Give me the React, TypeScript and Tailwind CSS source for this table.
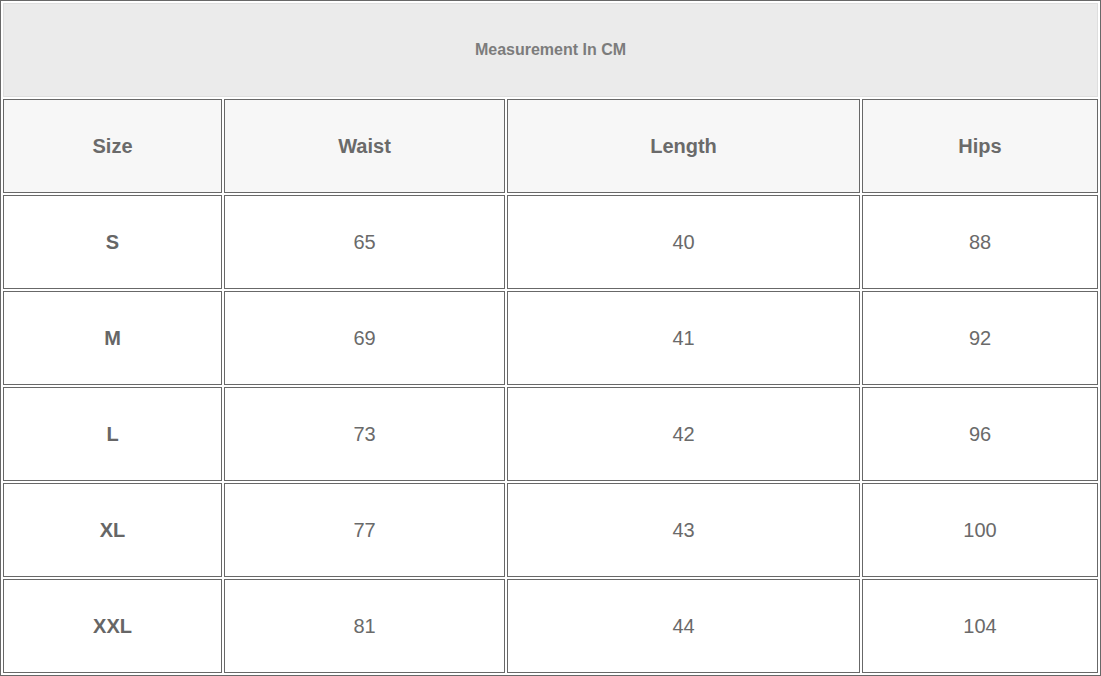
import React from 'react'

const rows = [
  { size: 'S', waist: 65, length: 40, hips: 88 },
  { size: 'M', waist: 69, length: 41, hips: 92 },
  { size: 'L', waist: 73, length: 42, hips: 96 },
  { size: 'XL', waist: 77, length: 43, hips: 100 },
  { size: 'XXL', waist: 81, length: 44, hips: 104 },
]

const cell = 'h-[94px] border border-[#686868] flex items-center justify-center'

export default function App() {
  return (
    <div className="w-[1101px] h-[676px] bg-white font-['Liberation_Sans',Arial,sans-serif]">
      {/* Size chart */}
      <div className="grid grid-cols-[219px_281px_353px_236px] gap-[2px] p-[2px] border border-[#686868]">
        <div className="col-span-4 h-[94px] border border-[#dedede] bg-[#ebebeb] flex items-center justify-center">
          <p className="text-[16px] font-bold text-[#7c7c7c]">Measurement In CM</p>
        </div>

        {['Size', 'Waist', 'Length', 'Hips'].map((h) => (
          <div key={h} className={`${cell} bg-[#f7f7f7]`}>
            <p className="text-[20px] font-bold text-[#6a6a6a]">{h}</p>
          </div>
        ))}

        {rows.map((r) => (
          <React.Fragment key={r.size}>
            <div className={cell}>
              <p className="text-[20px] font-bold text-[#666666]">{r.size}</p>
            </div>
            <div className={cell}>
              <p className="text-[20px] text-[#6a6a6a]">{r.waist}</p>
            </div>
            <div className={cell}>
              <p className="text-[20px] text-[#6a6a6a]">{r.length}</p>
            </div>
            <div className={cell}>
              <p className="text-[20px] text-[#6a6a6a]">{r.hips}</p>
            </div>
          </React.Fragment>
        ))}
      </div>
    </div>
  )
}
